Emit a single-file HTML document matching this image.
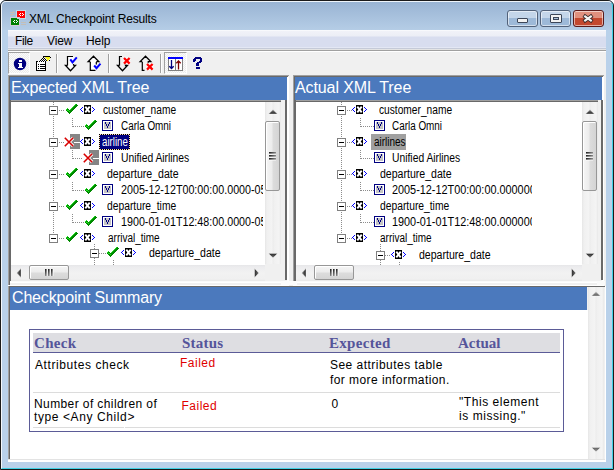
<!DOCTYPE html>
<html><head><meta charset="utf-8"><title>XML Checkpoint Results</title><style>
*{margin:0;padding:0;box-sizing:border-box}
html,body{width:614px;height:470px;overflow:hidden;background:#fff;font-family:"Liberation Sans",sans-serif}
.a{position:absolute;display:block}
.t{position:absolute;white-space:pre;line-height:1;transform-origin:0 0}
.ser{font-family:"Liberation Serif",serif;font-weight:bold}
</style></head><body>
<div class="a" style="left:0px;top:0px;width:614px;height:470px;background:#b9d1ea;border-radius:6px 6px 0 0;"></div>
<div class="a" style="left:0px;top:0px;width:614px;height:30px;background:linear-gradient(#97b2d2,#b5cde6);border-radius:6px 6px 0 0;"></div>
<div class="a" style="left:0;top:0;width:614px;height:470px;border:1px solid #1a1a1a;border-radius:6px 6px 0 0"></div>
<div class="a" style="left:1px;top:1px;width:612px;height:468px;border-top:1px solid #eef4fa;border-left:1px solid #f4f8fc;border-right:1px solid #3fd0e4;border-bottom:1px solid #3fd0e4;border-radius:5px 5px 0 0"></div>
<svg class="a" style="left:0;top:0" width="30" height="30" viewBox="0 0 30 30" shape-rendering="crispEdges">
<g fill="#c4beb6"><rect x="10" y="12" width="5" height="1"/><rect x="10" y="14" width="5" height="1"/><rect x="13" y="11" width="1" height="1"/><rect x="12" y="13" width="1" height="1"/><rect x="11" y="15" width="1" height="1"/></g>
<rect x="16" y="10" width="10" height="9" fill="#c9dbe6"/>
<rect x="17" y="11" width="8" height="7" fill="#ff0000"/>
<g fill="#fff"><rect x="19" y="14" width="1" height="1"/><rect x="20" y="13" width="1" height="1"/><rect x="20" y="15" width="1" height="1"/><rect x="22" y="13" width="1" height="1"/><rect x="23" y="14" width="1" height="1"/><rect x="22" y="15" width="1" height="1"/></g>
<rect x="10" y="17" width="10" height="9" fill="#d4ccd8"/>
<rect x="11" y="18" width="8" height="7" fill="#008000"/>
<rect x="17" y="18" width="2" height="1" fill="#d4ccd8"/>
<g fill="#fff"><rect x="13" y="21" width="1" height="1"/><rect x="14" y="20" width="1" height="1"/><rect x="14" y="22" width="1" height="1"/><rect x="16" y="20" width="1" height="1"/><rect x="17" y="21" width="1" height="1"/><rect x="16" y="22" width="1" height="1"/></g>
<g fill="#c4beb6"><rect x="21" y="22" width="5" height="1"/><rect x="21" y="24" width="5" height="1"/></g>
</svg>
<div class="t" style="left:29px;top:13px;font-size:12px;color:#000;letter-spacing:-0.15px">XML Checkpoint Results</div>
<div class="a" style="left:507px;top:10px;width:31px;height:17px;border:1px solid #52627a;border-radius:3px;background:linear-gradient(#c4d6ea 0,#c4d6ea 7.5px,#9db9d8 7.5px,#9db9d8 100%);box-shadow:inset 0 0 0 1px rgba(255,255,255,0.55)"></div>
<div class="a" style="left:517px;top:18px;width:11px;height:5px;border:1px solid #3c4658;border-radius:1px;background:#f2f2f2"></div>
<div class="a" style="left:540px;top:10px;width:31px;height:17px;border:1px solid #52627a;border-radius:3px;background:linear-gradient(#c4d6ea 0,#c4d6ea 7.5px,#9db9d8 7.5px,#9db9d8 100%);box-shadow:inset 0 0 0 1px rgba(255,255,255,0.55)"></div>
<div class="a" style="left:550px;top:14px;width:12px;height:9px;border:1px solid #3c4658;border-radius:1px;background:#f2f2f2"></div><div class="a" style="left:553px;top:17px;width:6px;height:3px;border:1px solid #3c4658;background:#a9bfd8"></div>
<div class="a" style="left:573px;top:10px;width:31px;height:17px;border:1px solid #5a1a1a;border-radius:3px;background:linear-gradient(#e0907e 0,#e0907e 7.5px,#c3482f 7.5px,#c3482f 100%);box-shadow:inset 0 0 0 1px rgba(255,255,255,0.55)"></div>
<svg class="a" style="left:580px;top:13px" width="16" height="11" viewBox="0 0 16 11"><path d="M3.6 2.4 L12.4 8.6 M12.4 2.4 L3.6 8.6" stroke="#3a2a2a" stroke-width="3.8"/><path d="M4.3 2.9 L11.7 8.1 M11.7 2.9 L4.3 8.1" stroke="#f4f4f4" stroke-width="2.2"/></svg>
<div class="a" style="left:8px;top:30px;width:598px;height:18px;background:linear-gradient(#f8f9fc 0px,#f8f9fc 1px,#f1f2f8 1px,#eceef6 6px,#d8ddef 7px,#d8ddef 17px,#e3e7f4 17px);"></div>
<div class="a" style="left:8px;top:48px;width:598px;height:1px;background:#c5cad8;"></div>
<div class="a" style="left:8px;top:49px;width:598px;height:1px;background:#e4e4e4;"></div>
<div class="a" style="left:8px;top:50px;width:598px;height:1px;background:#a0a0a0;"></div>
<div class="a" style="left:8px;top:51px;width:598px;height:1px;background:#ffffff;"></div>
<div class="t" style="left:15px;top:34.5px;font-size:12px;color:#000;letter-spacing:-0.4px">File</div>
<div class="t" style="left:47px;top:34.5px;font-size:12px;color:#000;letter-spacing:-0.1px">View</div>
<div class="t" style="left:86px;top:34.5px;font-size:12px;color:#000;letter-spacing:-0.1px">Help</div>
<div class="a" style="left:8px;top:52px;width:598px;height:410px;background:#f0f0f0;"></div>
<div class="a" style="left:8px;top:52px;width:22px;height:22px;background-color:#fbfbfb;background-image:linear-gradient(45deg,#ececec 25%,transparent 25%,transparent 75%,#ececec 75%),linear-gradient(45deg,#ececec 25%,transparent 25%,transparent 75%,#ececec 75%);background-size:2px 2px;background-position:0 0,1px 1px;border-top:1px solid #a0a0a0;border-left:1px solid #a0a0a0;border-right:1px solid #fff;border-bottom:1px solid #fff"></div>
<div class="a" style="left:164px;top:52px;width:23px;height:22px;background-color:#fbfbfb;background-image:linear-gradient(45deg,#ececec 25%,transparent 25%,transparent 75%,#ececec 75%),linear-gradient(45deg,#ececec 25%,transparent 25%,transparent 75%,#ececec 75%);background-size:2px 2px;background-position:0 0,1px 1px;border-top:1px solid #a0a0a0;border-left:1px solid #a0a0a0;border-right:1px solid #fff;border-bottom:1px solid #fff"></div>
<div class="a" style="left:56px;top:54px;width:1px;height:19px;background:#a0a0a0;"></div>
<div class="a" style="left:57px;top:54px;width:1px;height:19px;background:#fff;"></div>
<div class="a" style="left:108px;top:54px;width:1px;height:19px;background:#a0a0a0;"></div>
<div class="a" style="left:109px;top:54px;width:1px;height:19px;background:#fff;"></div>
<div class="a" style="left:160px;top:54px;width:1px;height:19px;background:#a0a0a0;"></div>
<div class="a" style="left:161px;top:54px;width:1px;height:19px;background:#fff;"></div>
<svg class="a" style="left:12px;top:56px;" width="16" height="16" viewBox="0 0 16 16"><circle cx="8" cy="8" r="6.2" fill="#000080"/><g fill="#fff" shape-rendering="crispEdges"><rect x="7" y="4" width="3" height="2"/><rect x="6" y="7" width="4" height="1"/><rect x="7" y="8" width="3" height="3"/><rect x="6" y="11" width="5" height="1"/></g></svg>
<svg class="a" style="left:0;top:0" width="60" height="80" viewBox="0 0 60 80" shape-rendering="crispEdges"><rect x="43" y="56" width="7" height="1" fill="#000"/><rect x="43" y="57" width="1" height="1" fill="#000"/><rect x="42" y="58" width="1" height="1" fill="#000"/><rect x="44" y="58" width="1" height="1" fill="#000"/><rect x="41" y="59" width="1" height="1" fill="#000"/><rect x="43" y="59" width="1" height="1" fill="#000"/><rect x="45" y="59" width="1" height="1" fill="#000"/><rect x="40" y="60" width="1" height="1" fill="#000"/><rect x="42" y="60" width="1" height="1" fill="#000"/><rect x="44" y="60" width="1" height="1" fill="#000"/><rect x="46" y="60" width="1" height="1" fill="#000"/><rect x="39" y="61" width="1" height="1" fill="#000"/><rect x="41" y="61" width="1" height="1" fill="#000"/><rect x="43" y="61" width="1" height="1" fill="#000"/><rect x="45" y="61" width="1" height="1" fill="#000"/><rect x="45" y="57" width="1" height="1" fill="#e8e840"/><rect x="46" y="57" width="1" height="1" fill="#ffff00"/><rect x="47" y="57" width="1" height="1" fill="#e8e840"/><rect x="48" y="57" width="1" height="1" fill="#ffff00"/><rect x="49" y="57" width="1" height="1" fill="#e8e840"/><rect x="46" y="58" width="1" height="1" fill="#e8e840"/><rect x="47" y="58" width="1" height="1" fill="#ffff00"/><rect x="48" y="58" width="1" height="1" fill="#e8e840"/><rect x="49" y="58" width="1" height="1" fill="#ffff00"/><rect x="47" y="59" width="1" height="1" fill="#e8e840"/><rect x="48" y="59" width="1" height="1" fill="#ffff00"/><rect x="47" y="60" width="1" height="1" fill="#ffff00"/><rect x="50" y="57" width="1" height="1" fill="#000"/><rect x="49" y="60" width="1" height="1" fill="#000"/><rect x="36" y="61" width="10" height="10" fill="#000"/><rect x="37" y="62" width="8" height="8" fill="#fff"/><rect x="38" y="61" width="1" height="1" fill="#fff"/><rect x="40" y="61" width="1" height="1" fill="#fff"/><rect x="42" y="61" width="1" height="1" fill="#fff"/><rect x="44" y="61" width="1" height="1" fill="#fff"/><rect x="36" y="70" width="10" height="1" fill="#000"/><rect x="38" y="64" width="1" height="1" fill="#000"/><rect x="40" y="64" width="5" height="1" fill="#000"/><rect x="38" y="66" width="1" height="1" fill="#000"/><rect x="40" y="66" width="5" height="1" fill="#000"/><rect x="38" y="68" width="1" height="1" fill="#000"/><rect x="40" y="68" width="5" height="1" fill="#000"/></svg>
<svg class="a" style="left:60px;top:54px;" width="20" height="20" viewBox="0 0 20 20"><path d="M7.5 12 V2.5 H13.5 V12 H15.5 L10.5 17 L5.5 12 Z" fill="#fff" stroke="none"/><path d="M7.5 11.5 V2.5 H13 M13.5 10 V11.5" fill="none" stroke="#000" stroke-width="1.2"/><path d="M7.5 11.5 H5.5 L10.5 16.8 L15.5 11.5 H13.5" fill="none" stroke="#000" stroke-width="1.3"/><path d="M10.3 5.3 L12.5 8.3 L16.8 3.3" fill="none" stroke="#0000ff" stroke-width="2"/></svg>
<svg class="a" style="left:84px;top:54px;" width="20" height="20" viewBox="0 0 20 20"><path d="M6 11.5 V16.5 H12 V7.5 H15 L9.5 2 L4 7.5 H6 Z" fill="#fff"/><path d="M6.3 8 V16.3 H11.5 M12.3 8 V10.5" fill="none" stroke="#000" stroke-width="1.2"/><path d="M6.3 7.6 H4.2 L9.5 2.2 L14.8 7.6 H12.3" fill="none" stroke="#000" stroke-width="1.3"/><path d="M10.2 11.5 L12.5 14.2 L16.5 9.7" fill="none" stroke="#0000ff" stroke-width="2"/></svg>
<svg class="a" style="left:112px;top:54px;" width="20" height="20" viewBox="0 0 20 20"><path d="M7.5 11.5 V2.5 H10" fill="none" stroke="#000" stroke-width="1.2"/><path d="M7.5 11.5 H5.5 L10.5 16.8 L15.5 11.5 H13.5 V10" fill="none" stroke="#000" stroke-width="1.3"/><path d="M12 4 L17.6 9.6 M17.6 4 L12 9.6" stroke="#fff" stroke-width="4" stroke-opacity="0.8"/><path d="M12 4 L17.6 9.6 M17.6 4 L12 9.6" stroke="#ff0000" stroke-width="2.3"/></svg>
<svg class="a" style="left:135px;top:54px;" width="20" height="20" viewBox="0 0 20 20"><path d="M7.3 8 V16.3 H9.5" fill="none" stroke="#000" stroke-width="1.2"/><path d="M7.3 7.6 H5.2 L10.5 2.2 L15.8 7.6 H13.3 V9.5" fill="none" stroke="#000" stroke-width="1.3"/><path d="M12 10 L17.6 15.6 M17.6 10 L12 15.6" stroke="#fff" stroke-width="4" stroke-opacity="0.8"/><path d="M12 10 L17.6 15.6 M17.6 10 L12 15.6" stroke="#ff0000" stroke-width="2.3"/></svg>
<svg class="a" style="left:166px;top:54px;" width="20" height="20" viewBox="0 0 20 20"><g shape-rendering="crispEdges">
<rect x="2" y="3" width="15" height="2" fill="#0000ff"/>
<rect x="2" y="5" width="15" height="12" fill="#808080"/><rect x="3" y="5" width="6" height="11" fill="#fff"/><rect x="10" y="5" width="6" height="11" fill="#fff"/>
</g>
<path d="M5.5 6 V14.5 M3.3 12.2 L5.5 14.5 L7.7 12.2" fill="none" stroke="#000080" stroke-width="1.3"/>
<path d="M12.5 15.5 V7 M10.3 9.3 L12.5 7 L14.7 9.3" fill="none" stroke="#800000" stroke-width="1.3"/></svg>
<svg class="a" style="left:0;top:0" width="210" height="75" viewBox="0 0 210 75" shape-rendering="crispEdges"><g fill="#000080"><rect x="195" y="57" width="6" height="1"/><rect x="194" y="58" width="8" height="1"/><rect x="193" y="59" width="3" height="1"/><rect x="200" y="59" width="2" height="1"/><rect x="193" y="60" width="3" height="1"/><rect x="200" y="60" width="2" height="1"/><rect x="193" y="61" width="2" height="1"/><rect x="199" y="61" width="3" height="1"/><rect x="197" y="62" width="4" height="1"/><rect x="196" y="63" width="3" height="1"/><rect x="196" y="64" width="3" height="1"/><rect x="196" y="65" width="3" height="1"/><rect x="196" y="67" width="4" height="1"/><rect x="196" y="68" width="4" height="1"/></g></svg>
<div class="a" style="left:8px;top:75px;width:281px;height:1px;background:#a0a0a0;"></div>
<div class="a" style="left:8px;top:75px;width:1px;height:211px;background:#a0a0a0;"></div>
<div class="a" style="left:9px;top:76px;width:279px;height:1px;background:#696969;"></div>
<div class="a" style="left:9px;top:76px;width:1px;height:210px;background:#696969;"></div>
<div class="a" style="left:287px;top:77px;width:2px;height:205px;background:#fff;"></div>
<div class="a" style="left:293px;top:75px;width:311px;height:1px;background:#a0a0a0;"></div>
<div class="a" style="left:293px;top:75px;width:1px;height:206px;background:#a0a0a0;"></div>
<div class="a" style="left:294px;top:76px;width:309px;height:1px;background:#696969;"></div>
<div class="a" style="left:294px;top:76px;width:1px;height:205px;background:#696969;"></div>
<div class="a" style="left:602px;top:77px;width:2px;height:204px;background:#fff;"></div>
<div class="a" style="left:10px;top:77px;width:277px;height:23px;background:#4b79bd;"></div>
<div class="t" style="left:11px;top:79.5px;font-size:16px;color:#fff;letter-spacing:-0.1px">Expected XML Tree</div>
<div class="a" style="left:295px;top:77px;width:307px;height:23px;background:#4b79bd;"></div>
<div class="t" style="left:295px;top:79.5px;font-size:16px;color:#fff;letter-spacing:-0.1px">Actual XML Tree</div>
<div class="a" style="left:10px;top:100px;width:271px;height:1px;background:#a0a0a0;"></div>
<div class="a" style="left:10px;top:101px;width:271px;height:1px;background:#696969;"></div>
<div class="a" style="left:10px;top:100px;width:1px;height:182px;background:#696969;"></div>
<div class="a" style="left:295px;top:100px;width:303px;height:1px;background:#a0a0a0;"></div>
<div class="a" style="left:295px;top:101px;width:303px;height:1px;background:#696969;"></div>
<div class="a" style="left:295px;top:100px;width:1px;height:182px;background:#696969;"></div>
<div class="a" style="left:285px;top:100px;width:2px;height:180px;background:#696969;"></div>
<div class="a" style="left:601px;top:100px;width:2px;height:180px;background:#696969;"></div>
<div class="a" style="left:10px;top:281px;width:277px;height:1px;background:#fafafa;"></div>
<div class="a" style="left:10px;top:282px;width:277px;height:1px;background:#fff;"></div>
<div class="a" style="left:8px;top:285px;width:281px;height:1px;background:#fff;"></div>
<div class="a" style="left:295px;top:281px;width:307px;height:1px;background:#fafafa;"></div>
<div class="a" style="left:295px;top:282px;width:307px;height:1px;background:#fff;"></div>
<div class="a" style="left:293px;top:285px;width:311px;height:1px;background:#fff;"></div>
<div class="a" style="left:281px;top:281px;width:16px;height:4px;background:#fcfcfc;"></div>
<div class="a" style="left:597px;top:281px;width:8px;height:4px;background:#fafafa;"></div>
<div class="a" style="left:11px;top:102px;width:254px;height:163px;overflow:hidden;background:#fff">
<svg class="a" style="left:0;top:0" width="254" height="163" viewBox="0 0 254 163"><g shape-rendering="crispEdges"><g fill="#8c8c8c"><rect x="42" y="0" width="1" height="1"/><rect x="42" y="2" width="1" height="1"/><rect x="42" y="4" width="1" height="1"/><rect x="42" y="6" width="1" height="1"/><rect x="42" y="8" width="1" height="1"/><rect x="42" y="10" width="1" height="1"/><rect x="42" y="12" width="1" height="1"/><rect x="42" y="14" width="1" height="1"/><rect x="42" y="16" width="1" height="1"/><rect x="42" y="18" width="1" height="1"/><rect x="42" y="20" width="1" height="1"/><rect x="42" y="22" width="1" height="1"/><rect x="42" y="24" width="1" height="1"/><rect x="42" y="26" width="1" height="1"/><rect x="42" y="28" width="1" height="1"/><rect x="42" y="30" width="1" height="1"/><rect x="42" y="32" width="1" height="1"/><rect x="42" y="34" width="1" height="1"/><rect x="42" y="36" width="1" height="1"/><rect x="42" y="38" width="1" height="1"/><rect x="42" y="40" width="1" height="1"/><rect x="42" y="42" width="1" height="1"/><rect x="42" y="44" width="1" height="1"/><rect x="42" y="46" width="1" height="1"/><rect x="42" y="48" width="1" height="1"/><rect x="42" y="50" width="1" height="1"/><rect x="42" y="52" width="1" height="1"/><rect x="42" y="54" width="1" height="1"/><rect x="42" y="56" width="1" height="1"/><rect x="42" y="58" width="1" height="1"/><rect x="42" y="60" width="1" height="1"/><rect x="42" y="62" width="1" height="1"/><rect x="42" y="64" width="1" height="1"/><rect x="42" y="66" width="1" height="1"/><rect x="42" y="68" width="1" height="1"/><rect x="42" y="70" width="1" height="1"/><rect x="42" y="72" width="1" height="1"/><rect x="42" y="74" width="1" height="1"/><rect x="42" y="76" width="1" height="1"/><rect x="42" y="78" width="1" height="1"/><rect x="42" y="80" width="1" height="1"/><rect x="42" y="82" width="1" height="1"/><rect x="42" y="84" width="1" height="1"/><rect x="42" y="86" width="1" height="1"/><rect x="42" y="88" width="1" height="1"/><rect x="42" y="90" width="1" height="1"/><rect x="42" y="92" width="1" height="1"/><rect x="42" y="94" width="1" height="1"/><rect x="42" y="96" width="1" height="1"/><rect x="42" y="98" width="1" height="1"/><rect x="42" y="100" width="1" height="1"/><rect x="42" y="102" width="1" height="1"/><rect x="42" y="104" width="1" height="1"/><rect x="42" y="106" width="1" height="1"/><rect x="42" y="108" width="1" height="1"/><rect x="42" y="110" width="1" height="1"/><rect x="42" y="112" width="1" height="1"/><rect x="42" y="114" width="1" height="1"/><rect x="42" y="116" width="1" height="1"/><rect x="42" y="118" width="1" height="1"/><rect x="42" y="120" width="1" height="1"/><rect x="42" y="122" width="1" height="1"/><rect x="42" y="124" width="1" height="1"/><rect x="42" y="126" width="1" height="1"/><rect x="42" y="128" width="1" height="1"/><rect x="42" y="130" width="1" height="1"/><rect x="83" y="142" width="1" height="1"/><rect x="83" y="144" width="1" height="1"/><rect x="83" y="146" width="1" height="1"/><rect x="83" y="156" width="1" height="1"/><rect x="83" y="158" width="1" height="1"/><rect x="83" y="160" width="1" height="1"/><rect x="83" y="162" width="1" height="1"/><rect x="83" y="164" width="1" height="1"/><rect x="83" y="166" width="1" height="1"/><rect x="83" y="168" width="1" height="1"/><rect x="102" y="158" width="1" height="1"/><rect x="102" y="160" width="1" height="1"/><rect x="102" y="162" width="1" height="1"/><rect x="102" y="164" width="1" height="1"/><rect x="102" y="166" width="1" height="1"/><rect x="102" y="168" width="1" height="1"/><rect x="48" y="8" width="1" height="1"/><rect x="50" y="8" width="1" height="1"/><rect x="52" y="8" width="1" height="1"/><rect x="61" y="16" width="1" height="1"/><rect x="61" y="18" width="1" height="1"/><rect x="61" y="20" width="1" height="1"/><rect x="61" y="22" width="1" height="1"/><rect x="61" y="24" width="1" height="1"/><rect x="62" y="24" width="1" height="1"/><rect x="64" y="24" width="1" height="1"/><rect x="66" y="24" width="1" height="1"/><rect x="68" y="24" width="1" height="1"/><rect x="70" y="24" width="1" height="1"/><rect x="72" y="24" width="1" height="1"/><rect x="48" y="40" width="1" height="1"/><rect x="50" y="40" width="1" height="1"/><rect x="52" y="40" width="1" height="1"/><rect x="61" y="48" width="1" height="1"/><rect x="61" y="50" width="1" height="1"/><rect x="61" y="52" width="1" height="1"/><rect x="61" y="54" width="1" height="1"/><rect x="61" y="56" width="1" height="1"/><rect x="62" y="56" width="1" height="1"/><rect x="64" y="56" width="1" height="1"/><rect x="66" y="56" width="1" height="1"/><rect x="68" y="56" width="1" height="1"/><rect x="70" y="56" width="1" height="1"/><rect x="48" y="72" width="1" height="1"/><rect x="50" y="72" width="1" height="1"/><rect x="52" y="72" width="1" height="1"/><rect x="61" y="80" width="1" height="1"/><rect x="61" y="82" width="1" height="1"/><rect x="61" y="84" width="1" height="1"/><rect x="61" y="86" width="1" height="1"/><rect x="61" y="88" width="1" height="1"/><rect x="62" y="88" width="1" height="1"/><rect x="64" y="88" width="1" height="1"/><rect x="66" y="88" width="1" height="1"/><rect x="68" y="88" width="1" height="1"/><rect x="70" y="88" width="1" height="1"/><rect x="72" y="88" width="1" height="1"/><rect x="48" y="104" width="1" height="1"/><rect x="50" y="104" width="1" height="1"/><rect x="52" y="104" width="1" height="1"/><rect x="61" y="112" width="1" height="1"/><rect x="61" y="114" width="1" height="1"/><rect x="61" y="116" width="1" height="1"/><rect x="61" y="118" width="1" height="1"/><rect x="61" y="120" width="1" height="1"/><rect x="62" y="120" width="1" height="1"/><rect x="64" y="120" width="1" height="1"/><rect x="66" y="120" width="1" height="1"/><rect x="68" y="120" width="1" height="1"/><rect x="70" y="120" width="1" height="1"/><rect x="72" y="120" width="1" height="1"/><rect x="48" y="136" width="1" height="1"/><rect x="50" y="136" width="1" height="1"/><rect x="52" y="136" width="1" height="1"/><rect x="88" y="151" width="1" height="1"/><rect x="90" y="151" width="1" height="1"/><rect x="92" y="151" width="1" height="1"/><rect x="94" y="151" width="1" height="1"/></g><rect x="38.5" y="4.5" width="8" height="8" fill="#fff" stroke="#808080" stroke-width="1"/><rect x="40" y="8" width="5" height="1" fill="#000"/><rect x="64" y="2" width="2" height="1" fill="#008a00"/><rect x="63" y="3" width="4" height="1" fill="#008a00"/><rect x="62" y="4" width="4" height="1" fill="#008a00"/><rect x="61" y="5" width="4" height="1" fill="#008a00"/><rect x="56" y="6" width="1" height="1" fill="#008a00"/><rect x="60" y="6" width="4" height="1" fill="#008a00"/><rect x="55" y="7" width="3" height="1" fill="#008a00"/><rect x="59" y="7" width="4" height="1" fill="#008a00"/><rect x="55" y="8" width="7" height="1" fill="#008a00"/><rect x="56" y="9" width="5" height="1" fill="#008a00"/><rect x="57" y="10" width="3" height="1" fill="#008a00"/><rect x="58" y="11" width="1" height="1" fill="#008a00"/><rect x="64" y="2" width="1" height="1" fill="#22e022"/><rect x="63" y="3" width="1" height="1" fill="#22e022"/><rect x="62" y="4" width="1" height="1" fill="#22e022"/><rect x="61" y="5" width="1" height="1" fill="#22e022"/><rect x="60" y="6" width="1" height="1" fill="#22e022"/><rect x="59" y="7" width="1" height="1" fill="#22e022"/><rect x="56" y="6" width="1" height="1" fill="#22e022"/><rect x="55" y="7" width="1" height="1" fill="#22e022"/><rect x="58" y="9" width="1" height="1" fill="#22e022"/><rect x="57" y="8" width="1" height="1" fill="#22e022"/><rect x="56" y="8" width="1" height="1" fill="#22e022"/><rect x="71" y="5" width="1" height="1" fill="#0000ff"/><rect x="70" y="6" width="1" height="1" fill="#0000ff"/><rect x="69" y="7" width="1" height="1" fill="#0000ff"/><rect x="70" y="8" width="1" height="1" fill="#0000ff"/><rect x="71" y="9" width="1" height="1" fill="#0000ff"/><rect x="81" y="5" width="1" height="1" fill="#0000ff"/><rect x="82" y="6" width="1" height="1" fill="#0000ff"/><rect x="83" y="7" width="1" height="1" fill="#0000ff"/><rect x="82" y="8" width="1" height="1" fill="#0000ff"/><rect x="81" y="9" width="1" height="1" fill="#0000ff"/><rect x="73" y="3" width="7" height="9" fill="#000"/><path d="M74.3 4.700000000000003 L78.7 10.299999999999997 M78.7 4.700000000000003 L74.3 10.299999999999997" stroke="#fff" stroke-width="1.9" shape-rendering="auto"/><rect x="83" y="18" width="2" height="1" fill="#008a00"/><rect x="82" y="19" width="4" height="1" fill="#008a00"/><rect x="81" y="20" width="4" height="1" fill="#008a00"/><rect x="80" y="21" width="4" height="1" fill="#008a00"/><rect x="75" y="22" width="1" height="1" fill="#008a00"/><rect x="79" y="22" width="4" height="1" fill="#008a00"/><rect x="74" y="23" width="3" height="1" fill="#008a00"/><rect x="78" y="23" width="4" height="1" fill="#008a00"/><rect x="74" y="24" width="7" height="1" fill="#008a00"/><rect x="75" y="25" width="5" height="1" fill="#008a00"/><rect x="76" y="26" width="3" height="1" fill="#008a00"/><rect x="77" y="27" width="1" height="1" fill="#008a00"/><rect x="83" y="18" width="1" height="1" fill="#22e022"/><rect x="82" y="19" width="1" height="1" fill="#22e022"/><rect x="81" y="20" width="1" height="1" fill="#22e022"/><rect x="80" y="21" width="1" height="1" fill="#22e022"/><rect x="79" y="22" width="1" height="1" fill="#22e022"/><rect x="78" y="23" width="1" height="1" fill="#22e022"/><rect x="75" y="22" width="1" height="1" fill="#22e022"/><rect x="74" y="23" width="1" height="1" fill="#22e022"/><rect x="77" y="25" width="1" height="1" fill="#22e022"/><rect x="76" y="24" width="1" height="1" fill="#22e022"/><rect x="75" y="24" width="1" height="1" fill="#22e022"/><rect x="91.5" y="18.5" width="10" height="10" fill="#fff" stroke="#000080" stroke-width="1"/><rect x="93" y="20" width="7" height="7" fill="#c4c4c4"/><rect x="94" y="20" width="1" height="1" fill="#000080"/><rect x="98" y="20" width="1" height="1" fill="#000080"/><rect x="94" y="21" width="1" height="1" fill="#000080"/><rect x="98" y="21" width="1" height="1" fill="#000080"/><rect x="95" y="22" width="1" height="1" fill="#000080"/><rect x="97" y="22" width="1" height="1" fill="#000080"/><rect x="95" y="23" width="1" height="1" fill="#000080"/><rect x="97" y="23" width="1" height="1" fill="#000080"/><rect x="96" y="24" width="1" height="1" fill="#000080"/><rect x="96" y="25" width="1" height="1" fill="#000080"/><rect x="38.5" y="36.5" width="8" height="8" fill="#fff" stroke="#808080" stroke-width="1"/><rect x="40" y="40" width="5" height="1" fill="#000"/><rect x="59" y="32" width="10" height="15" fill="#858585"/><rect x="63" y="39.5" width="6" height="1.2" fill="#fff"/><path d="M53.8 35.8 L62.2 44.2 M62.2 35.8 L53.8 44.2" stroke="#fff" stroke-width="3.2" shape-rendering="auto"/><path d="M53.8 35.8 L62.2 44.2 M62.2 35.8 L53.8 44.2" stroke="#d80000" stroke-width="1.6" shape-rendering="auto"/><rect x="71" y="37" width="1" height="1" fill="#0000ff"/><rect x="70" y="38" width="1" height="1" fill="#0000ff"/><rect x="69" y="39" width="1" height="1" fill="#0000ff"/><rect x="70" y="40" width="1" height="1" fill="#0000ff"/><rect x="71" y="41" width="1" height="1" fill="#0000ff"/><rect x="81" y="37" width="1" height="1" fill="#0000ff"/><rect x="82" y="38" width="1" height="1" fill="#0000ff"/><rect x="83" y="39" width="1" height="1" fill="#0000ff"/><rect x="82" y="40" width="1" height="1" fill="#0000ff"/><rect x="81" y="41" width="1" height="1" fill="#0000ff"/><rect x="73" y="35" width="7" height="9" fill="#000"/><path d="M74.3 36.69999999999999 L78.7 42.30000000000001 M78.7 36.69999999999999 L74.3 42.30000000000001" stroke="#fff" stroke-width="1.9" shape-rendering="auto"/><rect x="78" y="48" width="10" height="15" fill="#858585"/><rect x="82" y="55.5" width="6" height="1.2" fill="#fff"/><path d="M72.8 51.8 L81.2 60.2 M81.2 51.8 L72.8 60.2" stroke="#fff" stroke-width="3.2" shape-rendering="auto"/><path d="M72.8 51.8 L81.2 60.2 M81.2 51.8 L72.8 60.2" stroke="#d80000" stroke-width="1.6" shape-rendering="auto"/><rect x="91.5" y="50.5" width="10" height="10" fill="#fff" stroke="#000080" stroke-width="1"/><rect x="93" y="52" width="7" height="7" fill="#c4c4c4"/><rect x="94" y="52" width="1" height="1" fill="#000080"/><rect x="98" y="52" width="1" height="1" fill="#000080"/><rect x="94" y="53" width="1" height="1" fill="#000080"/><rect x="98" y="53" width="1" height="1" fill="#000080"/><rect x="95" y="54" width="1" height="1" fill="#000080"/><rect x="97" y="54" width="1" height="1" fill="#000080"/><rect x="95" y="55" width="1" height="1" fill="#000080"/><rect x="97" y="55" width="1" height="1" fill="#000080"/><rect x="96" y="56" width="1" height="1" fill="#000080"/><rect x="96" y="57" width="1" height="1" fill="#000080"/><rect x="38.5" y="68.5" width="8" height="8" fill="#fff" stroke="#808080" stroke-width="1"/><rect x="40" y="72" width="5" height="1" fill="#000"/><rect x="64" y="66" width="2" height="1" fill="#008a00"/><rect x="63" y="67" width="4" height="1" fill="#008a00"/><rect x="62" y="68" width="4" height="1" fill="#008a00"/><rect x="61" y="69" width="4" height="1" fill="#008a00"/><rect x="56" y="70" width="1" height="1" fill="#008a00"/><rect x="60" y="70" width="4" height="1" fill="#008a00"/><rect x="55" y="71" width="3" height="1" fill="#008a00"/><rect x="59" y="71" width="4" height="1" fill="#008a00"/><rect x="55" y="72" width="7" height="1" fill="#008a00"/><rect x="56" y="73" width="5" height="1" fill="#008a00"/><rect x="57" y="74" width="3" height="1" fill="#008a00"/><rect x="58" y="75" width="1" height="1" fill="#008a00"/><rect x="64" y="66" width="1" height="1" fill="#22e022"/><rect x="63" y="67" width="1" height="1" fill="#22e022"/><rect x="62" y="68" width="1" height="1" fill="#22e022"/><rect x="61" y="69" width="1" height="1" fill="#22e022"/><rect x="60" y="70" width="1" height="1" fill="#22e022"/><rect x="59" y="71" width="1" height="1" fill="#22e022"/><rect x="56" y="70" width="1" height="1" fill="#22e022"/><rect x="55" y="71" width="1" height="1" fill="#22e022"/><rect x="58" y="73" width="1" height="1" fill="#22e022"/><rect x="57" y="72" width="1" height="1" fill="#22e022"/><rect x="56" y="72" width="1" height="1" fill="#22e022"/><rect x="71" y="69" width="1" height="1" fill="#0000ff"/><rect x="70" y="70" width="1" height="1" fill="#0000ff"/><rect x="69" y="71" width="1" height="1" fill="#0000ff"/><rect x="70" y="72" width="1" height="1" fill="#0000ff"/><rect x="71" y="73" width="1" height="1" fill="#0000ff"/><rect x="81" y="69" width="1" height="1" fill="#0000ff"/><rect x="82" y="70" width="1" height="1" fill="#0000ff"/><rect x="83" y="71" width="1" height="1" fill="#0000ff"/><rect x="82" y="72" width="1" height="1" fill="#0000ff"/><rect x="81" y="73" width="1" height="1" fill="#0000ff"/><rect x="73" y="67" width="7" height="9" fill="#000"/><path d="M74.3 68.69999999999999 L78.7 74.30000000000001 M78.7 68.69999999999999 L74.3 74.30000000000001" stroke="#fff" stroke-width="1.9" shape-rendering="auto"/><rect x="83" y="82" width="2" height="1" fill="#008a00"/><rect x="82" y="83" width="4" height="1" fill="#008a00"/><rect x="81" y="84" width="4" height="1" fill="#008a00"/><rect x="80" y="85" width="4" height="1" fill="#008a00"/><rect x="75" y="86" width="1" height="1" fill="#008a00"/><rect x="79" y="86" width="4" height="1" fill="#008a00"/><rect x="74" y="87" width="3" height="1" fill="#008a00"/><rect x="78" y="87" width="4" height="1" fill="#008a00"/><rect x="74" y="88" width="7" height="1" fill="#008a00"/><rect x="75" y="89" width="5" height="1" fill="#008a00"/><rect x="76" y="90" width="3" height="1" fill="#008a00"/><rect x="77" y="91" width="1" height="1" fill="#008a00"/><rect x="83" y="82" width="1" height="1" fill="#22e022"/><rect x="82" y="83" width="1" height="1" fill="#22e022"/><rect x="81" y="84" width="1" height="1" fill="#22e022"/><rect x="80" y="85" width="1" height="1" fill="#22e022"/><rect x="79" y="86" width="1" height="1" fill="#22e022"/><rect x="78" y="87" width="1" height="1" fill="#22e022"/><rect x="75" y="86" width="1" height="1" fill="#22e022"/><rect x="74" y="87" width="1" height="1" fill="#22e022"/><rect x="77" y="89" width="1" height="1" fill="#22e022"/><rect x="76" y="88" width="1" height="1" fill="#22e022"/><rect x="75" y="88" width="1" height="1" fill="#22e022"/><rect x="91.5" y="82.5" width="10" height="10" fill="#fff" stroke="#000080" stroke-width="1"/><rect x="93" y="84" width="7" height="7" fill="#c4c4c4"/><rect x="94" y="84" width="1" height="1" fill="#000080"/><rect x="98" y="84" width="1" height="1" fill="#000080"/><rect x="94" y="85" width="1" height="1" fill="#000080"/><rect x="98" y="85" width="1" height="1" fill="#000080"/><rect x="95" y="86" width="1" height="1" fill="#000080"/><rect x="97" y="86" width="1" height="1" fill="#000080"/><rect x="95" y="87" width="1" height="1" fill="#000080"/><rect x="97" y="87" width="1" height="1" fill="#000080"/><rect x="96" y="88" width="1" height="1" fill="#000080"/><rect x="96" y="89" width="1" height="1" fill="#000080"/><rect x="38.5" y="100.5" width="8" height="8" fill="#fff" stroke="#808080" stroke-width="1"/><rect x="40" y="104" width="5" height="1" fill="#000"/><rect x="64" y="98" width="2" height="1" fill="#008a00"/><rect x="63" y="99" width="4" height="1" fill="#008a00"/><rect x="62" y="100" width="4" height="1" fill="#008a00"/><rect x="61" y="101" width="4" height="1" fill="#008a00"/><rect x="56" y="102" width="1" height="1" fill="#008a00"/><rect x="60" y="102" width="4" height="1" fill="#008a00"/><rect x="55" y="103" width="3" height="1" fill="#008a00"/><rect x="59" y="103" width="4" height="1" fill="#008a00"/><rect x="55" y="104" width="7" height="1" fill="#008a00"/><rect x="56" y="105" width="5" height="1" fill="#008a00"/><rect x="57" y="106" width="3" height="1" fill="#008a00"/><rect x="58" y="107" width="1" height="1" fill="#008a00"/><rect x="64" y="98" width="1" height="1" fill="#22e022"/><rect x="63" y="99" width="1" height="1" fill="#22e022"/><rect x="62" y="100" width="1" height="1" fill="#22e022"/><rect x="61" y="101" width="1" height="1" fill="#22e022"/><rect x="60" y="102" width="1" height="1" fill="#22e022"/><rect x="59" y="103" width="1" height="1" fill="#22e022"/><rect x="56" y="102" width="1" height="1" fill="#22e022"/><rect x="55" y="103" width="1" height="1" fill="#22e022"/><rect x="58" y="105" width="1" height="1" fill="#22e022"/><rect x="57" y="104" width="1" height="1" fill="#22e022"/><rect x="56" y="104" width="1" height="1" fill="#22e022"/><rect x="71" y="101" width="1" height="1" fill="#0000ff"/><rect x="70" y="102" width="1" height="1" fill="#0000ff"/><rect x="69" y="103" width="1" height="1" fill="#0000ff"/><rect x="70" y="104" width="1" height="1" fill="#0000ff"/><rect x="71" y="105" width="1" height="1" fill="#0000ff"/><rect x="81" y="101" width="1" height="1" fill="#0000ff"/><rect x="82" y="102" width="1" height="1" fill="#0000ff"/><rect x="83" y="103" width="1" height="1" fill="#0000ff"/><rect x="82" y="104" width="1" height="1" fill="#0000ff"/><rect x="81" y="105" width="1" height="1" fill="#0000ff"/><rect x="73" y="99" width="7" height="9" fill="#000"/><path d="M74.3 100.69999999999999 L78.7 106.30000000000001 M78.7 100.69999999999999 L74.3 106.30000000000001" stroke="#fff" stroke-width="1.9" shape-rendering="auto"/><rect x="83" y="114" width="2" height="1" fill="#008a00"/><rect x="82" y="115" width="4" height="1" fill="#008a00"/><rect x="81" y="116" width="4" height="1" fill="#008a00"/><rect x="80" y="117" width="4" height="1" fill="#008a00"/><rect x="75" y="118" width="1" height="1" fill="#008a00"/><rect x="79" y="118" width="4" height="1" fill="#008a00"/><rect x="74" y="119" width="3" height="1" fill="#008a00"/><rect x="78" y="119" width="4" height="1" fill="#008a00"/><rect x="74" y="120" width="7" height="1" fill="#008a00"/><rect x="75" y="121" width="5" height="1" fill="#008a00"/><rect x="76" y="122" width="3" height="1" fill="#008a00"/><rect x="77" y="123" width="1" height="1" fill="#008a00"/><rect x="83" y="114" width="1" height="1" fill="#22e022"/><rect x="82" y="115" width="1" height="1" fill="#22e022"/><rect x="81" y="116" width="1" height="1" fill="#22e022"/><rect x="80" y="117" width="1" height="1" fill="#22e022"/><rect x="79" y="118" width="1" height="1" fill="#22e022"/><rect x="78" y="119" width="1" height="1" fill="#22e022"/><rect x="75" y="118" width="1" height="1" fill="#22e022"/><rect x="74" y="119" width="1" height="1" fill="#22e022"/><rect x="77" y="121" width="1" height="1" fill="#22e022"/><rect x="76" y="120" width="1" height="1" fill="#22e022"/><rect x="75" y="120" width="1" height="1" fill="#22e022"/><rect x="91.5" y="114.5" width="10" height="10" fill="#fff" stroke="#000080" stroke-width="1"/><rect x="93" y="116" width="7" height="7" fill="#c4c4c4"/><rect x="94" y="116" width="1" height="1" fill="#000080"/><rect x="98" y="116" width="1" height="1" fill="#000080"/><rect x="94" y="117" width="1" height="1" fill="#000080"/><rect x="98" y="117" width="1" height="1" fill="#000080"/><rect x="95" y="118" width="1" height="1" fill="#000080"/><rect x="97" y="118" width="1" height="1" fill="#000080"/><rect x="95" y="119" width="1" height="1" fill="#000080"/><rect x="97" y="119" width="1" height="1" fill="#000080"/><rect x="96" y="120" width="1" height="1" fill="#000080"/><rect x="96" y="121" width="1" height="1" fill="#000080"/><rect x="38.5" y="132.5" width="8" height="8" fill="#fff" stroke="#808080" stroke-width="1"/><rect x="40" y="136" width="5" height="1" fill="#000"/><rect x="64" y="130" width="2" height="1" fill="#008a00"/><rect x="63" y="131" width="4" height="1" fill="#008a00"/><rect x="62" y="132" width="4" height="1" fill="#008a00"/><rect x="61" y="133" width="4" height="1" fill="#008a00"/><rect x="56" y="134" width="1" height="1" fill="#008a00"/><rect x="60" y="134" width="4" height="1" fill="#008a00"/><rect x="55" y="135" width="3" height="1" fill="#008a00"/><rect x="59" y="135" width="4" height="1" fill="#008a00"/><rect x="55" y="136" width="7" height="1" fill="#008a00"/><rect x="56" y="137" width="5" height="1" fill="#008a00"/><rect x="57" y="138" width="3" height="1" fill="#008a00"/><rect x="58" y="139" width="1" height="1" fill="#008a00"/><rect x="64" y="130" width="1" height="1" fill="#22e022"/><rect x="63" y="131" width="1" height="1" fill="#22e022"/><rect x="62" y="132" width="1" height="1" fill="#22e022"/><rect x="61" y="133" width="1" height="1" fill="#22e022"/><rect x="60" y="134" width="1" height="1" fill="#22e022"/><rect x="59" y="135" width="1" height="1" fill="#22e022"/><rect x="56" y="134" width="1" height="1" fill="#22e022"/><rect x="55" y="135" width="1" height="1" fill="#22e022"/><rect x="58" y="137" width="1" height="1" fill="#22e022"/><rect x="57" y="136" width="1" height="1" fill="#22e022"/><rect x="56" y="136" width="1" height="1" fill="#22e022"/><rect x="71" y="133" width="1" height="1" fill="#0000ff"/><rect x="70" y="134" width="1" height="1" fill="#0000ff"/><rect x="69" y="135" width="1" height="1" fill="#0000ff"/><rect x="70" y="136" width="1" height="1" fill="#0000ff"/><rect x="71" y="137" width="1" height="1" fill="#0000ff"/><rect x="81" y="133" width="1" height="1" fill="#0000ff"/><rect x="82" y="134" width="1" height="1" fill="#0000ff"/><rect x="83" y="135" width="1" height="1" fill="#0000ff"/><rect x="82" y="136" width="1" height="1" fill="#0000ff"/><rect x="81" y="137" width="1" height="1" fill="#0000ff"/><rect x="73" y="131" width="7" height="9" fill="#000"/><path d="M74.3 132.7 L78.7 138.3 M78.7 132.7 L74.3 138.3" stroke="#fff" stroke-width="1.9" shape-rendering="auto"/><rect x="79.5" y="147.5" width="8" height="8" fill="#fff" stroke="#808080" stroke-width="1"/><rect x="81" y="151" width="5" height="1" fill="#000"/><rect x="105" y="145" width="2" height="1" fill="#008a00"/><rect x="104" y="146" width="4" height="1" fill="#008a00"/><rect x="103" y="147" width="4" height="1" fill="#008a00"/><rect x="102" y="148" width="4" height="1" fill="#008a00"/><rect x="97" y="149" width="1" height="1" fill="#008a00"/><rect x="101" y="149" width="4" height="1" fill="#008a00"/><rect x="96" y="150" width="3" height="1" fill="#008a00"/><rect x="100" y="150" width="4" height="1" fill="#008a00"/><rect x="96" y="151" width="7" height="1" fill="#008a00"/><rect x="97" y="152" width="5" height="1" fill="#008a00"/><rect x="98" y="153" width="3" height="1" fill="#008a00"/><rect x="99" y="154" width="1" height="1" fill="#008a00"/><rect x="105" y="145" width="1" height="1" fill="#22e022"/><rect x="104" y="146" width="1" height="1" fill="#22e022"/><rect x="103" y="147" width="1" height="1" fill="#22e022"/><rect x="102" y="148" width="1" height="1" fill="#22e022"/><rect x="101" y="149" width="1" height="1" fill="#22e022"/><rect x="100" y="150" width="1" height="1" fill="#22e022"/><rect x="97" y="149" width="1" height="1" fill="#22e022"/><rect x="96" y="150" width="1" height="1" fill="#22e022"/><rect x="99" y="152" width="1" height="1" fill="#22e022"/><rect x="98" y="151" width="1" height="1" fill="#22e022"/><rect x="97" y="151" width="1" height="1" fill="#22e022"/><rect x="112" y="148" width="1" height="1" fill="#0000ff"/><rect x="111" y="149" width="1" height="1" fill="#0000ff"/><rect x="110" y="150" width="1" height="1" fill="#0000ff"/><rect x="111" y="151" width="1" height="1" fill="#0000ff"/><rect x="112" y="152" width="1" height="1" fill="#0000ff"/><rect x="122" y="148" width="1" height="1" fill="#0000ff"/><rect x="123" y="149" width="1" height="1" fill="#0000ff"/><rect x="124" y="150" width="1" height="1" fill="#0000ff"/><rect x="123" y="151" width="1" height="1" fill="#0000ff"/><rect x="122" y="152" width="1" height="1" fill="#0000ff"/><rect x="114" y="146" width="7" height="9" fill="#000"/><path d="M115.3 147.7 L119.69999999999999 153.3 M119.69999999999999 147.7 L115.3 153.3" stroke="#fff" stroke-width="1.9" shape-rendering="auto"/></g></svg>
<div class="t" style="left:91.5px;top:2px;font-size:12px;color:#000;transform:scaleX(0.849)">customer_name</div>
<div class="t" style="left:109.7px;top:18px;font-size:12px;color:#000;transform:scaleX(0.825)">Carla Omni</div>
<div class="a" style="left:88px;top:32px;width:31px;height:16px;background:#000080"></div>
<div class="a" style="left:88px;top:32px;width:31px;height:1px;background:repeating-linear-gradient(90deg,#000 0,#000 1px,#ffd8b8 1px,#ffd8b8 2px)"></div>
<div class="a" style="left:88px;top:47px;width:31px;height:1px;background:repeating-linear-gradient(90deg,#000 0,#000 1px,#ffd8b8 1px,#ffd8b8 2px)"></div>
<div class="a" style="left:88px;top:32px;width:1px;height:16px;background:repeating-linear-gradient(180deg,#000 0,#000 1px,#ffd8b8 1px,#ffd8b8 2px)"></div>
<div class="a" style="left:118px;top:32px;width:1px;height:16px;background:repeating-linear-gradient(180deg,#000 0,#000 1px,#ffd8b8 1px,#ffd8b8 2px)"></div>
<div class="t" style="left:90.5px;top:34px;font-size:12px;color:#fff;transform:scaleX(0.806)">airline</div>
<div class="t" style="left:109.7px;top:50px;font-size:12px;color:#000;transform:scaleX(0.86)">Unified Airlines</div>
<div class="t" style="left:96.2px;top:66px;font-size:12px;color:#000;transform:scaleX(0.88)">departure_date</div>
<div class="a" style="left:109.7px;top:80px;width:142.3px;height:16px;overflow:hidden">
<div class="t" style="left:0px;top:2px;font-size:12px;color:#000;transform:scaleX(0.894)">2005-12-12T00:00:00.0000-05:00</div>
</div>
<div class="t" style="left:96.2px;top:98px;font-size:12px;color:#000;transform:scaleX(0.857)">departure_time</div>
<div class="a" style="left:109.7px;top:112px;width:142.3px;height:16px;overflow:hidden">
<div class="t" style="left:0px;top:2px;font-size:12px;color:#000;transform:scaleX(0.894)">1900-01-01T12:48:00.0000-05:00</div>
</div>
<div class="t" style="left:97px;top:130px;font-size:12px;color:#000;transform:scaleX(0.832)">arrival_time</div>
<div class="t" style="left:138px;top:145px;font-size:12px;color:#000;transform:scaleX(0.88)">departure_date</div>
</div>
<div class="a" style="left:296px;top:102px;width:286px;height:163px;overflow:hidden;background:#fff">
<svg class="a" style="left:0;top:0" width="286" height="163" viewBox="0 0 286 163"><g shape-rendering="crispEdges"><g fill="#8c8c8c"><rect x="45" y="0" width="1" height="1"/><rect x="45" y="2" width="1" height="1"/><rect x="45" y="4" width="1" height="1"/><rect x="45" y="6" width="1" height="1"/><rect x="45" y="8" width="1" height="1"/><rect x="45" y="10" width="1" height="1"/><rect x="45" y="12" width="1" height="1"/><rect x="45" y="14" width="1" height="1"/><rect x="45" y="16" width="1" height="1"/><rect x="45" y="18" width="1" height="1"/><rect x="45" y="20" width="1" height="1"/><rect x="45" y="22" width="1" height="1"/><rect x="45" y="24" width="1" height="1"/><rect x="45" y="26" width="1" height="1"/><rect x="45" y="28" width="1" height="1"/><rect x="45" y="30" width="1" height="1"/><rect x="45" y="32" width="1" height="1"/><rect x="45" y="34" width="1" height="1"/><rect x="45" y="36" width="1" height="1"/><rect x="45" y="38" width="1" height="1"/><rect x="45" y="40" width="1" height="1"/><rect x="45" y="42" width="1" height="1"/><rect x="45" y="44" width="1" height="1"/><rect x="45" y="46" width="1" height="1"/><rect x="45" y="48" width="1" height="1"/><rect x="45" y="50" width="1" height="1"/><rect x="45" y="52" width="1" height="1"/><rect x="45" y="54" width="1" height="1"/><rect x="45" y="56" width="1" height="1"/><rect x="45" y="58" width="1" height="1"/><rect x="45" y="60" width="1" height="1"/><rect x="45" y="62" width="1" height="1"/><rect x="45" y="64" width="1" height="1"/><rect x="45" y="66" width="1" height="1"/><rect x="45" y="68" width="1" height="1"/><rect x="45" y="70" width="1" height="1"/><rect x="45" y="72" width="1" height="1"/><rect x="45" y="74" width="1" height="1"/><rect x="45" y="76" width="1" height="1"/><rect x="45" y="78" width="1" height="1"/><rect x="45" y="80" width="1" height="1"/><rect x="45" y="82" width="1" height="1"/><rect x="45" y="84" width="1" height="1"/><rect x="45" y="86" width="1" height="1"/><rect x="45" y="88" width="1" height="1"/><rect x="45" y="90" width="1" height="1"/><rect x="45" y="92" width="1" height="1"/><rect x="45" y="94" width="1" height="1"/><rect x="45" y="96" width="1" height="1"/><rect x="45" y="98" width="1" height="1"/><rect x="45" y="100" width="1" height="1"/><rect x="45" y="102" width="1" height="1"/><rect x="45" y="104" width="1" height="1"/><rect x="45" y="106" width="1" height="1"/><rect x="45" y="108" width="1" height="1"/><rect x="45" y="110" width="1" height="1"/><rect x="45" y="112" width="1" height="1"/><rect x="45" y="114" width="1" height="1"/><rect x="45" y="116" width="1" height="1"/><rect x="45" y="118" width="1" height="1"/><rect x="45" y="120" width="1" height="1"/><rect x="45" y="122" width="1" height="1"/><rect x="45" y="124" width="1" height="1"/><rect x="45" y="126" width="1" height="1"/><rect x="45" y="128" width="1" height="1"/><rect x="45" y="130" width="1" height="1"/><rect x="84" y="142" width="1" height="1"/><rect x="84" y="144" width="1" height="1"/><rect x="84" y="146" width="1" height="1"/><rect x="84" y="148" width="1" height="1"/><rect x="84" y="158" width="1" height="1"/><rect x="84" y="160" width="1" height="1"/><rect x="84" y="162" width="1" height="1"/><rect x="84" y="164" width="1" height="1"/><rect x="84" y="166" width="1" height="1"/><rect x="84" y="168" width="1" height="1"/><rect x="103" y="160" width="1" height="1"/><rect x="103" y="162" width="1" height="1"/><rect x="103" y="164" width="1" height="1"/><rect x="103" y="166" width="1" height="1"/><rect x="103" y="168" width="1" height="1"/><rect x="51" y="8" width="1" height="1"/><rect x="53" y="8" width="1" height="1"/><rect x="55" y="8" width="1" height="1"/><rect x="64" y="16" width="1" height="1"/><rect x="64" y="18" width="1" height="1"/><rect x="64" y="20" width="1" height="1"/><rect x="64" y="22" width="1" height="1"/><rect x="64" y="24" width="1" height="1"/><rect x="65" y="24" width="1" height="1"/><rect x="67" y="24" width="1" height="1"/><rect x="69" y="24" width="1" height="1"/><rect x="71" y="24" width="1" height="1"/><rect x="73" y="24" width="1" height="1"/><rect x="75" y="24" width="1" height="1"/><rect x="77" y="24" width="1" height="1"/><rect x="51" y="40" width="1" height="1"/><rect x="53" y="40" width="1" height="1"/><rect x="55" y="40" width="1" height="1"/><rect x="64" y="48" width="1" height="1"/><rect x="64" y="50" width="1" height="1"/><rect x="64" y="52" width="1" height="1"/><rect x="64" y="54" width="1" height="1"/><rect x="64" y="56" width="1" height="1"/><rect x="65" y="56" width="1" height="1"/><rect x="67" y="56" width="1" height="1"/><rect x="69" y="56" width="1" height="1"/><rect x="71" y="56" width="1" height="1"/><rect x="73" y="56" width="1" height="1"/><rect x="75" y="56" width="1" height="1"/><rect x="77" y="56" width="1" height="1"/><rect x="51" y="72" width="1" height="1"/><rect x="53" y="72" width="1" height="1"/><rect x="55" y="72" width="1" height="1"/><rect x="64" y="80" width="1" height="1"/><rect x="64" y="82" width="1" height="1"/><rect x="64" y="84" width="1" height="1"/><rect x="64" y="86" width="1" height="1"/><rect x="64" y="88" width="1" height="1"/><rect x="65" y="88" width="1" height="1"/><rect x="67" y="88" width="1" height="1"/><rect x="69" y="88" width="1" height="1"/><rect x="71" y="88" width="1" height="1"/><rect x="73" y="88" width="1" height="1"/><rect x="75" y="88" width="1" height="1"/><rect x="77" y="88" width="1" height="1"/><rect x="51" y="104" width="1" height="1"/><rect x="53" y="104" width="1" height="1"/><rect x="55" y="104" width="1" height="1"/><rect x="64" y="112" width="1" height="1"/><rect x="64" y="114" width="1" height="1"/><rect x="64" y="116" width="1" height="1"/><rect x="64" y="118" width="1" height="1"/><rect x="64" y="120" width="1" height="1"/><rect x="65" y="120" width="1" height="1"/><rect x="67" y="120" width="1" height="1"/><rect x="69" y="120" width="1" height="1"/><rect x="71" y="120" width="1" height="1"/><rect x="73" y="120" width="1" height="1"/><rect x="75" y="120" width="1" height="1"/><rect x="77" y="120" width="1" height="1"/><rect x="51" y="136" width="1" height="1"/><rect x="53" y="136" width="1" height="1"/><rect x="55" y="136" width="1" height="1"/><rect x="89" y="153" width="1" height="1"/><rect x="91" y="153" width="1" height="1"/><rect x="93" y="153" width="1" height="1"/></g><rect x="41.5" y="4.5" width="8" height="8" fill="#fff" stroke="#808080" stroke-width="1"/><rect x="43" y="8" width="5" height="1" fill="#000"/><rect x="58" y="5" width="1" height="1" fill="#0000ff"/><rect x="57" y="6" width="1" height="1" fill="#0000ff"/><rect x="56" y="7" width="1" height="1" fill="#0000ff"/><rect x="57" y="8" width="1" height="1" fill="#0000ff"/><rect x="58" y="9" width="1" height="1" fill="#0000ff"/><rect x="68" y="5" width="1" height="1" fill="#0000ff"/><rect x="69" y="6" width="1" height="1" fill="#0000ff"/><rect x="70" y="7" width="1" height="1" fill="#0000ff"/><rect x="69" y="8" width="1" height="1" fill="#0000ff"/><rect x="68" y="9" width="1" height="1" fill="#0000ff"/><rect x="60" y="3" width="7" height="9" fill="#000"/><path d="M61.30000000000001 4.700000000000003 L65.69999999999999 10.299999999999997 M65.69999999999999 4.700000000000003 L61.30000000000001 10.299999999999997" stroke="#fff" stroke-width="1.9" shape-rendering="auto"/><rect x="78.5" y="18.5" width="10" height="10" fill="#fff" stroke="#000080" stroke-width="1"/><rect x="80" y="20" width="7" height="7" fill="#c4c4c4"/><rect x="81" y="20" width="1" height="1" fill="#000080"/><rect x="85" y="20" width="1" height="1" fill="#000080"/><rect x="81" y="21" width="1" height="1" fill="#000080"/><rect x="85" y="21" width="1" height="1" fill="#000080"/><rect x="82" y="22" width="1" height="1" fill="#000080"/><rect x="84" y="22" width="1" height="1" fill="#000080"/><rect x="82" y="23" width="1" height="1" fill="#000080"/><rect x="84" y="23" width="1" height="1" fill="#000080"/><rect x="83" y="24" width="1" height="1" fill="#000080"/><rect x="83" y="25" width="1" height="1" fill="#000080"/><rect x="41.5" y="36.5" width="8" height="8" fill="#fff" stroke="#808080" stroke-width="1"/><rect x="43" y="40" width="5" height="1" fill="#000"/><rect x="58" y="37" width="1" height="1" fill="#0000ff"/><rect x="57" y="38" width="1" height="1" fill="#0000ff"/><rect x="56" y="39" width="1" height="1" fill="#0000ff"/><rect x="57" y="40" width="1" height="1" fill="#0000ff"/><rect x="58" y="41" width="1" height="1" fill="#0000ff"/><rect x="68" y="37" width="1" height="1" fill="#0000ff"/><rect x="69" y="38" width="1" height="1" fill="#0000ff"/><rect x="70" y="39" width="1" height="1" fill="#0000ff"/><rect x="69" y="40" width="1" height="1" fill="#0000ff"/><rect x="68" y="41" width="1" height="1" fill="#0000ff"/><rect x="60" y="35" width="7" height="9" fill="#000"/><path d="M61.30000000000001 36.69999999999999 L65.69999999999999 42.30000000000001 M65.69999999999999 36.69999999999999 L61.30000000000001 42.30000000000001" stroke="#fff" stroke-width="1.9" shape-rendering="auto"/><rect x="78.5" y="50.5" width="10" height="10" fill="#fff" stroke="#000080" stroke-width="1"/><rect x="80" y="52" width="7" height="7" fill="#c4c4c4"/><rect x="81" y="52" width="1" height="1" fill="#000080"/><rect x="85" y="52" width="1" height="1" fill="#000080"/><rect x="81" y="53" width="1" height="1" fill="#000080"/><rect x="85" y="53" width="1" height="1" fill="#000080"/><rect x="82" y="54" width="1" height="1" fill="#000080"/><rect x="84" y="54" width="1" height="1" fill="#000080"/><rect x="82" y="55" width="1" height="1" fill="#000080"/><rect x="84" y="55" width="1" height="1" fill="#000080"/><rect x="83" y="56" width="1" height="1" fill="#000080"/><rect x="83" y="57" width="1" height="1" fill="#000080"/><rect x="41.5" y="68.5" width="8" height="8" fill="#fff" stroke="#808080" stroke-width="1"/><rect x="43" y="72" width="5" height="1" fill="#000"/><rect x="58" y="69" width="1" height="1" fill="#0000ff"/><rect x="57" y="70" width="1" height="1" fill="#0000ff"/><rect x="56" y="71" width="1" height="1" fill="#0000ff"/><rect x="57" y="72" width="1" height="1" fill="#0000ff"/><rect x="58" y="73" width="1" height="1" fill="#0000ff"/><rect x="68" y="69" width="1" height="1" fill="#0000ff"/><rect x="69" y="70" width="1" height="1" fill="#0000ff"/><rect x="70" y="71" width="1" height="1" fill="#0000ff"/><rect x="69" y="72" width="1" height="1" fill="#0000ff"/><rect x="68" y="73" width="1" height="1" fill="#0000ff"/><rect x="60" y="67" width="7" height="9" fill="#000"/><path d="M61.30000000000001 68.69999999999999 L65.69999999999999 74.30000000000001 M65.69999999999999 68.69999999999999 L61.30000000000001 74.30000000000001" stroke="#fff" stroke-width="1.9" shape-rendering="auto"/><rect x="78.5" y="82.5" width="10" height="10" fill="#fff" stroke="#000080" stroke-width="1"/><rect x="80" y="84" width="7" height="7" fill="#c4c4c4"/><rect x="81" y="84" width="1" height="1" fill="#000080"/><rect x="85" y="84" width="1" height="1" fill="#000080"/><rect x="81" y="85" width="1" height="1" fill="#000080"/><rect x="85" y="85" width="1" height="1" fill="#000080"/><rect x="82" y="86" width="1" height="1" fill="#000080"/><rect x="84" y="86" width="1" height="1" fill="#000080"/><rect x="82" y="87" width="1" height="1" fill="#000080"/><rect x="84" y="87" width="1" height="1" fill="#000080"/><rect x="83" y="88" width="1" height="1" fill="#000080"/><rect x="83" y="89" width="1" height="1" fill="#000080"/><rect x="41.5" y="100.5" width="8" height="8" fill="#fff" stroke="#808080" stroke-width="1"/><rect x="43" y="104" width="5" height="1" fill="#000"/><rect x="58" y="101" width="1" height="1" fill="#0000ff"/><rect x="57" y="102" width="1" height="1" fill="#0000ff"/><rect x="56" y="103" width="1" height="1" fill="#0000ff"/><rect x="57" y="104" width="1" height="1" fill="#0000ff"/><rect x="58" y="105" width="1" height="1" fill="#0000ff"/><rect x="68" y="101" width="1" height="1" fill="#0000ff"/><rect x="69" y="102" width="1" height="1" fill="#0000ff"/><rect x="70" y="103" width="1" height="1" fill="#0000ff"/><rect x="69" y="104" width="1" height="1" fill="#0000ff"/><rect x="68" y="105" width="1" height="1" fill="#0000ff"/><rect x="60" y="99" width="7" height="9" fill="#000"/><path d="M61.30000000000001 100.69999999999999 L65.69999999999999 106.30000000000001 M65.69999999999999 100.69999999999999 L61.30000000000001 106.30000000000001" stroke="#fff" stroke-width="1.9" shape-rendering="auto"/><rect x="78.5" y="114.5" width="10" height="10" fill="#fff" stroke="#000080" stroke-width="1"/><rect x="80" y="116" width="7" height="7" fill="#c4c4c4"/><rect x="81" y="116" width="1" height="1" fill="#000080"/><rect x="85" y="116" width="1" height="1" fill="#000080"/><rect x="81" y="117" width="1" height="1" fill="#000080"/><rect x="85" y="117" width="1" height="1" fill="#000080"/><rect x="82" y="118" width="1" height="1" fill="#000080"/><rect x="84" y="118" width="1" height="1" fill="#000080"/><rect x="82" y="119" width="1" height="1" fill="#000080"/><rect x="84" y="119" width="1" height="1" fill="#000080"/><rect x="83" y="120" width="1" height="1" fill="#000080"/><rect x="83" y="121" width="1" height="1" fill="#000080"/><rect x="41.5" y="132.5" width="8" height="8" fill="#fff" stroke="#808080" stroke-width="1"/><rect x="43" y="136" width="5" height="1" fill="#000"/><rect x="58" y="133" width="1" height="1" fill="#0000ff"/><rect x="57" y="134" width="1" height="1" fill="#0000ff"/><rect x="56" y="135" width="1" height="1" fill="#0000ff"/><rect x="57" y="136" width="1" height="1" fill="#0000ff"/><rect x="58" y="137" width="1" height="1" fill="#0000ff"/><rect x="68" y="133" width="1" height="1" fill="#0000ff"/><rect x="69" y="134" width="1" height="1" fill="#0000ff"/><rect x="70" y="135" width="1" height="1" fill="#0000ff"/><rect x="69" y="136" width="1" height="1" fill="#0000ff"/><rect x="68" y="137" width="1" height="1" fill="#0000ff"/><rect x="60" y="131" width="7" height="9" fill="#000"/><path d="M61.30000000000001 132.7 L65.69999999999999 138.3 M65.69999999999999 132.7 L61.30000000000001 138.3" stroke="#fff" stroke-width="1.9" shape-rendering="auto"/><rect x="80.5" y="149.5" width="8" height="8" fill="#fff" stroke="#808080" stroke-width="1"/><rect x="82" y="153" width="5" height="1" fill="#000"/><rect x="97" y="150" width="1" height="1" fill="#0000ff"/><rect x="96" y="151" width="1" height="1" fill="#0000ff"/><rect x="95" y="152" width="1" height="1" fill="#0000ff"/><rect x="96" y="153" width="1" height="1" fill="#0000ff"/><rect x="97" y="154" width="1" height="1" fill="#0000ff"/><rect x="107" y="150" width="1" height="1" fill="#0000ff"/><rect x="108" y="151" width="1" height="1" fill="#0000ff"/><rect x="109" y="152" width="1" height="1" fill="#0000ff"/><rect x="108" y="153" width="1" height="1" fill="#0000ff"/><rect x="107" y="154" width="1" height="1" fill="#0000ff"/><rect x="99" y="148" width="7" height="9" fill="#000"/><path d="M100.30000000000001 149.7 L104.69999999999999 155.3 M104.69999999999999 149.7 L100.30000000000001 155.3" stroke="#fff" stroke-width="1.9" shape-rendering="auto"/></g></svg>
<div class="t" style="left:83px;top:2px;font-size:12px;color:#000;transform:scaleX(0.849)">customer_name</div>
<div class="t" style="left:96px;top:18px;font-size:12px;color:#000;transform:scaleX(0.825)">Carla Omni</div>
<div class="a" style="left:75px;top:32px;width:35px;height:16px;background:#a0a0a0"></div>
<div class="t" style="left:77.5px;top:34px;font-size:12px;color:#000;transform:scaleX(0.83)">airlines</div>
<div class="t" style="left:96px;top:50px;font-size:12px;color:#000;transform:scaleX(0.86)">Unified Airlines</div>
<div class="t" style="left:83.5px;top:66px;font-size:12px;color:#000;transform:scaleX(0.88)">departure_date</div>
<div class="a" style="left:96px;top:80px;width:140px;height:16px;overflow:hidden">
<div class="t" style="left:0px;top:2px;font-size:12px;color:#000;transform:scaleX(0.905)">2005-12-12T00:00:00.0000000-05:00</div>
</div>
<div class="t" style="left:83.5px;top:98px;font-size:12px;color:#000;transform:scaleX(0.857)">departure_time</div>
<div class="a" style="left:96px;top:112px;width:140px;height:16px;overflow:hidden">
<div class="t" style="left:0px;top:2px;font-size:12px;color:#000;transform:scaleX(0.905)">1900-01-01T12:48:00.0000000-05:00</div>
</div>
<div class="t" style="left:83.5px;top:130px;font-size:12px;color:#000;transform:scaleX(0.832)">arrival_time</div>
<div class="t" style="left:123px;top:147px;font-size:12px;color:#000;transform:scaleX(0.88)">departure_date</div>
</div>
<svg class="a" style="left:0;top:0" width="1" height="1"><defs><linearGradient id="gd" x1="0" y1="0" x2="0" y2="1"><stop offset="0" stop-color="#1e1e1e"/><stop offset="1" stop-color="#8a8a8a"/></linearGradient><linearGradient id="gu" x1="0" y1="1" x2="0" y2="0"><stop offset="0" stop-color="#1e1e1e"/><stop offset="1" stop-color="#8a8a8a"/></linearGradient><linearGradient id="gr" x1="0" y1="0" x2="1" y2="0"><stop offset="0" stop-color="#1e1e1e"/><stop offset="1" stop-color="#8a8a8a"/></linearGradient><linearGradient id="gl" x1="1" y1="0" x2="0" y2="0"><stop offset="0" stop-color="#1e1e1e"/><stop offset="1" stop-color="#8a8a8a"/></linearGradient><linearGradient id="gu2" x1="0" y1="1" x2="0" y2="0"><stop offset="0" stop-color="#555"/><stop offset="1" stop-color="#b0b0b0"/></linearGradient><linearGradient id="gd2" x1="0" y1="0" x2="0" y2="1"><stop offset="0" stop-color="#555"/><stop offset="1" stop-color="#b0b0b0"/></linearGradient></defs></svg>
<div class="a" style="left:265px;top:102px;width:16px;height:162px;background:linear-gradient(90deg,#e6e6e6 0,#f0f0f0 2px,#f4f4f4 7px,#ebebeb 8px,#f0f0f0 9px,#f4f4f4 14px,#e8e8e8 16px)"></div>
<svg class="a" style="left:265px;top:107px;" width="16" height="8" viewBox="0 0 16 8"><path d="M3.6 7 L8 2.6 L12.4 7 Z" fill="url(#gu)" stroke="#fff" stroke-width="0.6" stroke-opacity="0.7"/></svg>
<svg class="a" style="left:265px;top:252px;" width="16" height="8" viewBox="0 0 16 8"><path d="M3.6 1.6 L8 6 L12.4 1.6 Z" fill="url(#gd)" stroke="#fff" stroke-width="0.6" stroke-opacity="0.7"/></svg>
<div class="a" style="left:265px;top:121px;width:15px;height:70px;border:1px solid #979797;border-radius:2px;background:linear-gradient(90deg,#f6f6f6 0,#ececec 45%,#dcdcdc 55%,#d4d4d4 100%);box-shadow:inset 1px 1px 0 #fff"></div>
<svg class="a" style="left:268px;top:151px;" width="9" height="10" viewBox="0 0 9 10"><g fill="#fff" opacity="0.9"><rect x="1" y="1.5" width="7" height="2"/><rect x="1" y="4.5" width="7" height="2"/><rect x="1" y="7.5" width="7" height="2"/></g><g fill="url(#gr)"><rect x="1" y="1" width="7" height="1.6"/><rect x="1" y="4" width="7" height="1.6"/><rect x="1" y="7" width="7" height="1.6"/></g></svg>
<div class="a" style="left:11px;top:265px;width:254px;height:16px;background:linear-gradient(#e6e6e8 0,#ececee 2px,#f2f2f2 8px,#f0f0f0 14px,#e8e8e8 16px)"></div>
<svg class="a" style="left:14px;top:265px;" width="8" height="16" viewBox="0 0 8 16"><path d="M7 3.6 L2.6 8 L7 12.4 Z" fill="url(#gl)" stroke="#fff" stroke-width="0.6" stroke-opacity="0.7"/></svg>
<svg class="a" style="left:253px;top:265px;" width="8" height="16" viewBox="0 0 8 16"><path d="M1.6 3.6 L6 8 L1.6 12.4 Z" fill="url(#gr)" stroke="#fff" stroke-width="0.6" stroke-opacity="0.7"/></svg>
<div class="a" style="left:29px;top:265px;width:40px;height:15px;border:1px solid #979797;border-radius:2px;background:linear-gradient(#f6f6f6 0,#ececec 45%,#dcdcdc 55%,#d4d4d4 100%);box-shadow:inset 1px 1px 0 #fff"></div>
<svg class="a" style="left:44px;top:268px;" width="10" height="10" viewBox="0 0 10 10"><g fill="#fff" opacity="0.9"><rect x="1.5" y="1" width="2" height="7"/><rect x="4.5" y="1" width="2" height="7"/><rect x="7.5" y="1" width="2" height="7"/></g><g fill="url(#gd)"><rect x="1" y="1" width="1.6" height="7"/><rect x="4" y="1" width="1.6" height="7"/><rect x="7" y="1" width="1.6" height="7"/></g></svg>
<div class="a" style="left:265px;top:264px;width:16px;height:17px;background:#f0f0f0;"></div>
<div class="a" style="left:582px;top:102px;width:16px;height:162px;background:linear-gradient(90deg,#e6e6e6 0,#f0f0f0 2px,#f4f4f4 7px,#ebebeb 8px,#f0f0f0 9px,#f4f4f4 14px,#e8e8e8 16px)"></div>
<svg class="a" style="left:582px;top:107px;" width="16" height="8" viewBox="0 0 16 8"><path d="M3.6 7 L8 2.6 L12.4 7 Z" fill="url(#gu)" stroke="#fff" stroke-width="0.6" stroke-opacity="0.7"/></svg>
<svg class="a" style="left:582px;top:252px;" width="16" height="8" viewBox="0 0 16 8"><path d="M3.6 1.6 L8 6 L12.4 1.6 Z" fill="url(#gd)" stroke="#fff" stroke-width="0.6" stroke-opacity="0.7"/></svg>
<div class="a" style="left:582px;top:121px;width:15px;height:70px;border:1px solid #979797;border-radius:2px;background:linear-gradient(90deg,#f6f6f6 0,#ececec 45%,#dcdcdc 55%,#d4d4d4 100%);box-shadow:inset 1px 1px 0 #fff"></div>
<svg class="a" style="left:585px;top:151px;" width="9" height="10" viewBox="0 0 9 10"><g fill="#fff" opacity="0.9"><rect x="1" y="1.5" width="7" height="2"/><rect x="1" y="4.5" width="7" height="2"/><rect x="1" y="7.5" width="7" height="2"/></g><g fill="url(#gr)"><rect x="1" y="1" width="7" height="1.6"/><rect x="1" y="4" width="7" height="1.6"/><rect x="1" y="7" width="7" height="1.6"/></g></svg>
<div class="a" style="left:296px;top:265px;width:286px;height:16px;background:linear-gradient(#e6e6e8 0,#ececee 2px,#f2f2f2 8px,#f0f0f0 14px,#e8e8e8 16px)"></div>
<svg class="a" style="left:299px;top:265px;" width="8" height="16" viewBox="0 0 8 16"><path d="M7 3.6 L2.6 8 L7 12.4 Z" fill="url(#gl)" stroke="#fff" stroke-width="0.6" stroke-opacity="0.7"/></svg>
<svg class="a" style="left:570px;top:265px;" width="8" height="16" viewBox="0 0 8 16"><path d="M1.6 3.6 L6 8 L1.6 12.4 Z" fill="url(#gr)" stroke="#fff" stroke-width="0.6" stroke-opacity="0.7"/></svg>
<div class="a" style="left:314px;top:265px;width:40px;height:15px;border:1px solid #979797;border-radius:2px;background:linear-gradient(#f6f6f6 0,#ececec 45%,#dcdcdc 55%,#d4d4d4 100%);box-shadow:inset 1px 1px 0 #fff"></div>
<svg class="a" style="left:329px;top:268px;" width="10" height="10" viewBox="0 0 10 10"><g fill="#fff" opacity="0.9"><rect x="1.5" y="1" width="2" height="7"/><rect x="4.5" y="1" width="2" height="7"/><rect x="7.5" y="1" width="2" height="7"/></g><g fill="url(#gd)"><rect x="1" y="1" width="1.6" height="7"/><rect x="4" y="1" width="1.6" height="7"/><rect x="7" y="1" width="1.6" height="7"/></g></svg>
<div class="a" style="left:582px;top:264px;width:16px;height:17px;background:#f0f0f0;"></div>
<div class="a" style="left:9px;top:286px;width:596px;height:1px;background:#696969;"></div>
<div class="a" style="left:8px;top:286px;width:1px;height:173px;background:#a0a0a0;"></div>
<div class="a" style="left:9px;top:286px;width:1px;height:173px;background:#696969;"></div>
<div class="a" style="left:10px;top:287px;width:577px;height:23px;background:#4b79bd;"></div>
<div class="t" style="left:12px;top:289.5px;font-size:16px;color:#fff;letter-spacing:-0.17px">Checkpoint Summary</div>
<div class="a" style="left:10px;top:310px;width:578px;height:149px;background:#fff;"></div>
<div class="a" style="left:588px;top:287px;width:16px;height:172px;background:linear-gradient(90deg,#e6e6e6 0,#f0f0f0 2px,#f4f4f4 7px,#ebebeb 8px,#f0f0f0 9px,#f4f4f4 14px,#e8e8e8 16px)"></div>
<svg class="a" style="left:588px;top:289px;" width="16" height="8" viewBox="0 0 16 8"><path d="M3.6 7 L8 2.6 L12.4 7 Z" fill="url(#gu2)" stroke="#fff" stroke-width="0.6" stroke-opacity="0.7"/></svg>
<svg class="a" style="left:588px;top:446px;" width="16" height="8" viewBox="0 0 16 8"><path d="M3.6 1.6 L8 6 L12.4 1.6 Z" fill="url(#gd2)" stroke="#fff" stroke-width="0.6" stroke-opacity="0.7"/></svg>
<div class="a" style="left:605px;top:286px;width:1px;height:176px;background:#fff;"></div>
<div class="a" style="left:8px;top:459px;width:597px;height:1px;background:#e3e3e3;"></div>
<div class="a" style="left:8px;top:460px;width:598px;height:2px;background:#fff;"></div>
<div class="a" style="left:29px;top:329px;width:535px;height:103px;border:1px solid #5b5b97"></div>
<div class="a" style="left:33px;top:333px;width:527px;height:19px;background:#dedee2;"></div>
<div class="a" style="left:33px;top:352px;width:527px;height:1px;background:#5b5b97;"></div>
<div class="a" style="left:33px;top:392px;width:527px;height:1px;background:#dcdcdc;"></div>
<div class="a" style="left:33px;top:427px;width:91px;height:1px;background:#dcdcdc;"></div>
<div class="a" style="left:125px;top:427px;width:435px;height:1px;background:#dcdcdc;"></div>
<div class="t ser" style="left:34px;top:335.5px;font-size:15px;color:#55559a;letter-spacing:0.3px">Check</div>
<div class="t ser" style="left:182px;top:335.5px;font-size:15px;color:#55559a;letter-spacing:0.2px">Status</div>
<div class="t ser" style="left:329px;top:335.5px;font-size:15px;color:#55559a;letter-spacing:0.3px">Expected</div>
<div class="t ser" style="left:458px;top:335.5px;font-size:15px;color:#55559a;letter-spacing:0px">Actual</div>
<div class="t" style="left:35px;top:358.5px;font-size:12px;color:#000;letter-spacing:0.58px">Attributes check</div>
<div class="t" style="left:180px;top:356.5px;font-size:12px;color:#e00000;letter-spacing:0.5px">Failed</div>
<div class="t" style="left:330px;top:358.5px;font-size:12px;color:#000;letter-spacing:0.47px">See attributes table</div>
<div class="t" style="left:330px;top:373.5px;font-size:12px;color:#000;letter-spacing:0.43px">for more information.</div>
<div class="t" style="left:34px;top:397.5px;font-size:12px;color:#000;letter-spacing:0.4px">Number of children of</div>
<div class="t" style="left:34px;top:411px;font-size:12px;color:#000;letter-spacing:0.6px">type &lt;Any Child&gt;</div>
<div class="t" style="left:181.5px;top:400px;font-size:12px;color:#e00000;letter-spacing:0.5px">Failed</div>
<div class="t" style="left:331.5px;top:398px;font-size:12px;color:#000;">0</div>
<div class="t" style="left:459px;top:396px;font-size:12px;color:#000;letter-spacing:0.55px">"This element</div>
<div class="t" style="left:459px;top:409.5px;font-size:12px;color:#000;letter-spacing:0.55px">is missing."</div>
</body></html>
